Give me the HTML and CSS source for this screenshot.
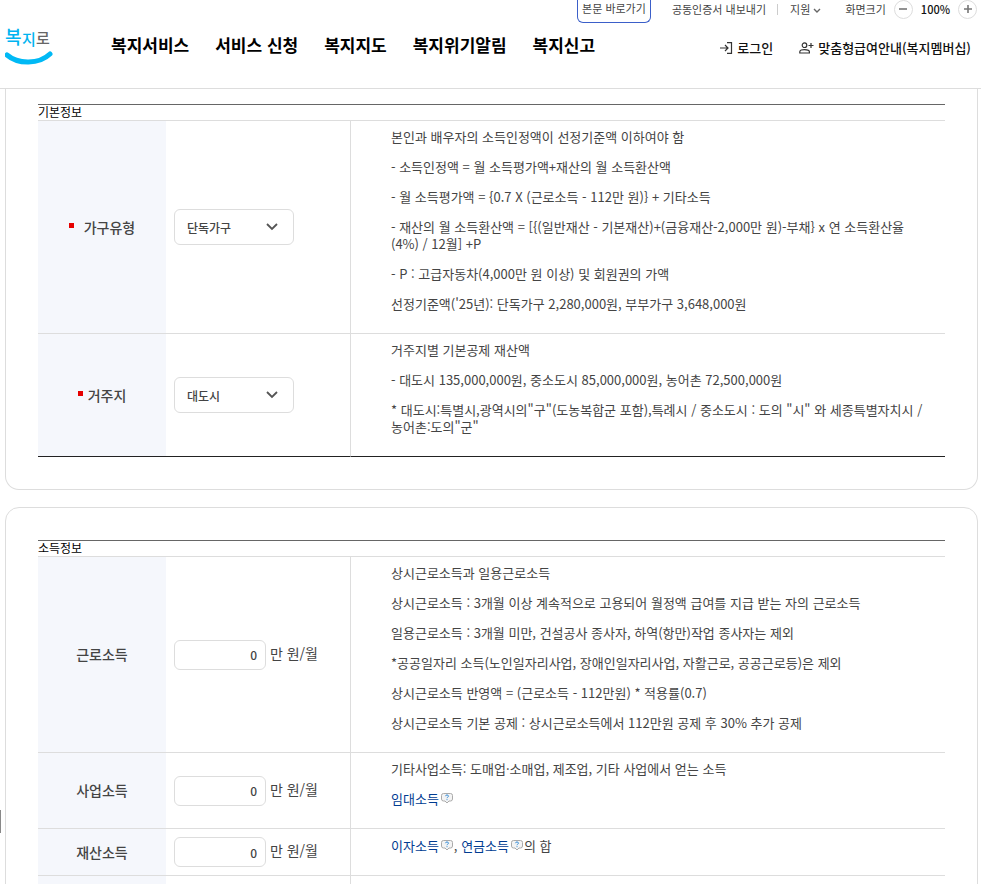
FILE: index.html
```html
<!DOCTYPE html>
<html lang="ko">
<head>
    <meta charset="UTF-8">
    <meta name="viewport" content="width=device-width, initial-scale=1.0">
    <title>복지로</title>
    <link rel="stylesheet" href="styles.css">
</head>
<body>
    <header>
        <div class="util">
            <a href="#content" class="skip">본문 바로가기</a>
            <a href="#cert" class="cert">공동인증서 내보내기</a>
            <button type="button" class="support">지원
                <svg width="8" height="6" viewBox="0 0 8 6"><path d="M1 1l3 3 3-3" fill="none" stroke="#666" stroke-width="1.4"/></svg>
            </button>
            <span class="zoom-label">화면크기</span>
            <button type="button" class="zoom" aria-label="축소">
                <svg width="10" height="10" viewBox="0 0 10 10"><path d="M1 5h8" stroke="#777" stroke-width="1.6"/></svg>
            </button>
            <span class="zoom-value">100%</span>
            <button type="button" class="zoom" aria-label="확대">
                <svg width="10" height="10" viewBox="0 0 10 10"><path d="M1 5h8M5 1v8" stroke="#777" stroke-width="1.6"/></svg>
            </button>
        </div>
        <div class="main-bar">
            <a href="#home" class="logo">
                <svg width="48" height="42" viewBox="0 0 48 42">
                    <text x="0" y="20" font-size="18" fill="#00b4f0">복</text>
                    <text x="17" y="21" font-size="15" fill="#00b4f0">지</text>
                    <text x="31" y="20" font-size="15" fill="#666">로</text>
                    <path d="M2 31C13 40.500 34 40.500 45 30" fill="none" stroke="#00b9f5" stroke-width="5" stroke-linecap="round"/>
                </svg>
            </a>
            <nav>
                <a href="#service">복지서비스</a>
                <a href="#apply">서비스 신청</a>
                <a href="#map">복지지도</a>
                <a href="#alert">복지위기알림</a>
                <a href="#report">복지신고</a>
            </nav>
            <div class="member">
                <a href="#login">
                    <svg width="13" height="12" viewBox="0 0 13 12"><path d="M0 6h8M5 3l3 3-3 3M7 .7h4.500v10.600H7" fill="none" stroke="#333" stroke-width="1.2"/></svg>로그인</a>
                <a href="#membership">
                    <svg width="15" height="12" viewBox="0 0 15 12"><g fill="none" stroke="#333" stroke-width="1.2"><circle cx="5.500" cy="3.200" r="2.300"/><path d="M.8 11V9.800C.8 8 3 7.600 5.500 7.600s4.900.4 4.900 2.200V11zM12 1v5M9.500 3.500h5"/></g></svg>맞춤형급여안내(복지멤버십)</a>
            </div>
        </div>
    </header>

    <main id="content">
        <section class="card first">
            <table>
                <caption>기본정보</caption>
                <tbody>
                    <tr>
                        <th scope="row"><label for="house" class="required wide">가구유형</label></th>
                        <td class="field">
                            <select id="house">
                                <option>단독가구</option>
                                <option>부부가구</option>
                            </select>
                        </td>
                        <td class="desc">
                            <p>본인과 배우자의 소득인정액이 선정기준액 이하여야 함</p>
                            <p>- 소득인정액 = 월 소득평가액+재산의 월 소득환산액</p>
                            <p>- 월 소득평가액 = {0.7 X (근로소득 - 112만 원)} + 기타소득</p>
                            <p>- 재산의 월 소득환산액 = [{(일반재산 - 기본재산)+(금융재산-2,000만 원)-부채} x 연 소득환산율(4%) / 12월] +P</p>
                            <p>- P : 고급자동차(4,000만 원 이상) 및 회원권의 가액</p>
                            <p>선정기준액('25년): 단독가구 2,280,000원, 부부가구 3,648,000원</p>
                        </td>
                    </tr>
                    <tr>
                        <th scope="row"><label for="area" class="required">거주지</label></th>
                        <td class="field">
                            <select id="area">
                                <option>대도시</option>
                                <option>중소도시</option>
                                <option>농어촌</option>
                            </select>
                        </td>
                        <td class="desc">
                            <p>거주지별 기본공제 재산액</p>
                            <p>- 대도시 135,000,000원, 중소도시 85,000,000원, 농어촌 72,500,000원</p>
                            <p>* 대도시:특별시,광역시의"구"(도농복합군 포함),특례시 / 중소도시 : 도의 "시" 와 세종특별자치시 / 농어촌:도의"군"</p>
                        </td>
                    </tr>
                </tbody>
            </table>
        </section>

        <section class="card">
            <table>
                <caption>소득정보</caption>
                <tbody>
                    <tr>
                        <th scope="row"><label for="work">근로소득</label></th>
                        <td class="field"><input type="text" id="work" value="0"> 만 원/월</td>
                        <td class="desc">
                            <p>상시근로소득과 일용근로소득</p>
                            <p>상시근로소득 : 3개월 이상 계속적으로 고용되어 월정액 급여를 지급 받는 자의 근로소득</p>
                            <p>일용근로소득 : 3개월 미만, 건설공사 종사자, 하역(항만)작업 종사자는 제외</p>
                            <p>*공공일자리 소득(노인일자리사업, 장애인일자리사업, 자활근로, 공공근로등)은 제외</p>
                            <p>상시근로소득 반영액 = (근로소득 - 112만원) * 적용률(0.7)</p>
                            <p>상시근로소득 기본 공제 : 상시근로소득에서 112만원 공제 후 30% 추가 공제</p>
                        </td>
                    </tr>
                    <tr>
                        <th scope="row"><label for="business">사업소득</label></th>
                        <td class="field"><input type="text" id="business" value="0"> 만 원/월</td>
                        <td class="desc">
                            <p>기타사업소득: 도매업·소매업, 제조업, 기타 사업에서 얻는 소득</p>
                            <p><a href="#rent">임대소득<svg class="help" width="12" height="11" viewBox="0 0 12 11"><path d="M2.500.5h7a2 2 0 0 1 2 2V6a2 2 0 0 1-2 2H8l-2 2-2-2H2.500a2 2 0 0 1-2-2V2.500a2 2 0 0 1 2-2z" fill="#f4f4f4" stroke="#aaa"/><path d="M4.500 3.200c0-1.700 3-1.700 3 0C7.500 4.200 6 4 6 5.200M6 6.200v1" fill="none" stroke="#3a8fd8"/></svg></a></p>
                        </td>
                    </tr>
                    <tr>
                        <th scope="row"><label for="asset">재산소득</label></th>
                        <td class="field"><input type="text" id="asset" value="0"> 만 원/월</td>
                        <td class="desc">
                            <p><a href="#interest">이자소득<svg class="help" width="12" height="11" viewBox="0 0 12 11"><path d="M2.500.5h7a2 2 0 0 1 2 2V6a2 2 0 0 1-2 2H8l-2 2-2-2H2.500a2 2 0 0 1-2-2V2.500a2 2 0 0 1 2-2z" fill="#f4f4f4" stroke="#aaa"/><path d="M4.500 3.200c0-1.700 3-1.700 3 0C7.500 4.200 6 4 6 5.200M6 6.200v1" fill="none" stroke="#3a8fd8"/></svg></a>, <a href="#pension">연금소득<svg class="help" width="12" height="11" viewBox="0 0 12 11"><path d="M2.500.5h7a2 2 0 0 1 2 2V6a2 2 0 0 1-2 2H8l-2 2-2-2H2.500a2 2 0 0 1-2-2V2.500a2 2 0 0 1 2-2z" fill="#f4f4f4" stroke="#aaa"/><path d="M4.500 3.200c0-1.700 3-1.700 3 0C7.500 4.200 6 4 6 5.200M6 6.200v1" fill="none" stroke="#3a8fd8"/></svg></a>의 합</p>
                        </td>
                    </tr>
                    <tr class="blank">
                        <th></th>
                        <td class="field"></td>
                        <td class="desc"></td>
                    </tr>
                </tbody>
            </table>
        </section>
    </main>
    <div class="side-handle"></div>
</body>
</html>
```

FILE: styles.css
```css
* {
    box-sizing: border-box;
}
body {
    margin: 0;
    height: 100vh;
    overflow: hidden;
    font-family: "Noto Sans CJK KR", sans-serif;
    font-size: 14px;
    line-height: 17px;
    color: #444;
    background-color: #fff;
}
a {
    color: inherit;
    text-decoration: none;
}
button {
    font: inherit;
    color: inherit;
    background: none;
    border: 0;
    padding: 0;
    cursor: pointer;
}

/* header */
header {
    border-bottom: 1px solid #ddd;
}
.util {
    display: flex;
    justify-content: flex-end;
    align-items: center;
    height: 23px;
    padding: 0 4px 5px 0;
    font-size: 11px;
}
.skip {
    height: 23px;
    margin-bottom: -5px;
    padding: 0 4px;
    border: 1px solid #3b5fc9;
    border-top: 0;
    border-radius: 0 0 6px 6px;
}
.cert {
    margin-left: 21px;
    padding-right: 11px;
    line-height: 11px;
    border-right: 1px solid #ccc;
}
.support {
    margin-left: 12px;
}
.zoom-label {
    margin: 0 8px 0 24px;
}
.zoom {
    display: flex;
    align-items: center;
    justify-content: center;
    width: 19px;
    height: 19px;
    border: 1px solid #ddd;
    border-radius: 50%;
}
.zoom-value {
    margin: 0 8px;
    font-weight: 500;
    color: #111;
}
.main-bar {
    display: flex;
    align-items: center;
    height: 65px;
    padding: 0 10px 22px 5px;
}
.logo {
    display: flex;
}
.logo text {
    font-weight: 500;
}
nav {
    display: flex;
    gap: 26px;
    margin-left: 58px;
    font-size: 17px;
    font-weight: 700;
    color: #000;
}
.member {
    display: flex;
    gap: 26px;
    margin: 6px 0 0 auto;
    font-size: 13px;
    font-weight: 500;
    color: #111;
}
.member a {
    display: flex;
    align-items: center;
    gap: 4px;
}

/* cards */
main {
    padding: 0 3px 0 5px;
}
.card {
    margin-bottom: 17px;
    padding: 32px;
    border: 1px solid #ddd;
    border-radius: 14px;
}
.card.first {
    padding-top: 15px;
    border-top: 0;
    border-radius: 0 0 14px 14px;
}
table {
    width: 100%;
    border-spacing: 0;
    border-top: 1px solid #ddd;
    table-layout: fixed;
}
caption {
    padding-bottom: 2px;
    border-top: 1px solid #666;
    font-size: 12px;
    line-height: 13px;
    text-align: left;
    color: #000;
}
th {
    width: 128px;
    padding: 0;
    font-weight: 500;
    background-color: #f5f7fc;
    border-bottom: 1px solid #ddd;
}
td {
    border-bottom: 1px solid #ddd;
}
.first tr:last-child > * {
    border-bottom-color: #222;
}
.field {
    width: 185px;
    padding: 8px;
    border-right: 1px solid #ddd;
}
.desc {
    padding: 7px 20px 8px 40px;
    font-size: 13px;
    word-break: keep-all;
}
.desc p {
    margin: 0 0 13px;
}
.desc a {
    color: #003c91;
}
.help {
    margin: 0 1px 0 2px;
}
.blank td {
    height: 47px;
}
.required::before {
    content: "";
    display: inline-block;
    width: 5px;
    height: 5px;
    margin-right: 5px;
    vertical-align: 5px;
    background-color: #e60000;
}
.required.wide::before {
    margin-right: 10px;
}
select,
input {
    font-family: inherit;
    font-size: 12px;
    font-weight: 500;
    color: #444;
    background-color: #fff;
    border: 1px solid #ddd;
    border-radius: 6px;
}
select {
    display: block;
    width: 120px;
    height: 36px;
    padding: 0 12px;
    appearance: none;
    background-image: url("data:image/svg+xml,%3Csvg xmlns='http://www.w3.org/2000/svg' width='12' height='8' viewBox='0 0 12 8'%3E%3Cpath d='M1 1l5 5 5-5' fill='none' stroke='%23555' stroke-width='1.8'/%3E%3C/svg%3E");
    background-repeat: no-repeat;
    background-position: right 15px center;
}
input {
    width: 92px;
    height: 30px;
    padding: 0 8px;
    text-align: right;
    vertical-align: middle;
}

.side-handle {
    position: fixed;
    left: 0;
    top: 810px;
    width: 1px;
    height: 23px;
    background-color: #888;
}
```
